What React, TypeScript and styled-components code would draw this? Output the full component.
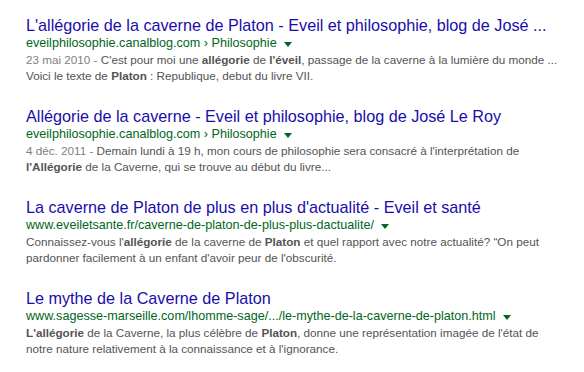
import styled, { createGlobalStyle } from "styled-components";

const GlobalStyle = createGlobalStyle`
  html, body {
    margin: 0;
    padding: 0;
    background: #ffffff;
  }
  body {
    font-family: "Liberation Sans", Arial, sans-serif;
  }
`;

const Page = styled.div`
  width: 584px;
  height: 372px;
  padding: 16px 0 0 26px;
  box-sizing: border-box;
  display: flex;
  flex-direction: column;
  gap: 23px;
  overflow: hidden;
`;

const Result = styled.div`
  display: flex;
  flex-direction: column;
`;

const Title = styled.a`
  font-size: 16.2px;
  line-height: 19px;
  color: #1a0dab;
  text-decoration: none;
  white-space: nowrap;
`;

const UrlRow = styled.div`
  display: flex;
  align-items: center;
  font-size: 12.6px;
  line-height: 17px;
  color: #006621;
  white-space: nowrap;
`;

const Arrow = styled.span`
  margin-left: 7px;
  margin-top: 1px;
  width: 0;
  height: 0;
  border-left: 4px solid transparent;
  border-right: 4px solid transparent;
  border-top: 5px solid #006621;
`;

const Snippet = styled.div`
  font-size: 11.7px;
  line-height: 16px;
  color: #545454;
  white-space: nowrap;
  b {
    font-weight: bold;
    color: #545454;
  }
`;

const Date = styled.span`
  color: #808080;
`;

function App() {
  return (
    <Page>
      <GlobalStyle />
      <Result>
        <Title>L'allégorie de la caverne de Platon - Eveil et philosophie, blog de José ...</Title>
        <UrlRow>eveilphilosophie.canalblog.com › Philosophie<Arrow /></UrlRow>
        <Snippet>
          <Date>23 mai 2010 - </Date>C'est pour moi une <b>allégorie</b> de <b>l'éveil</b>, passage de la caverne à la lumière du monde ...<br />
          Voici le texte de <b>Platon</b> : Republique, debut du livre VII.
        </Snippet>
      </Result>
      <Result>
        <Title>Allégorie de la caverne - Eveil et philosophie, blog de José Le Roy</Title>
        <UrlRow>eveilphilosophie.canalblog.com › Philosophie<Arrow /></UrlRow>
        <Snippet>
          <Date>4 déc. 2011 - </Date>Demain lundi à 19 h, mon cours de philosophie sera consacré à l'interprétation de<br />
          <b>l'Allégorie</b> de la Caverne, qui se trouve au début du livre...
        </Snippet>
      </Result>
      <Result>
        <Title>La caverne de Platon de plus en plus d'actualité - Eveil et santé</Title>
        <UrlRow>www.eveiletsante.fr/caverne-de-platon-de-plus-plus-dactualite/<Arrow /></UrlRow>
        <Snippet>
          Connaissez-vous l'<b>allégorie</b> de la caverne de <b>Platon</b> et quel rapport avec notre actualité? “On peut<br />
          pardonner facilement à un enfant d'avoir peur de l'obscurité.
        </Snippet>
      </Result>
      <Result>
        <Title>Le mythe de la Caverne de Platon</Title>
        <UrlRow>www.sagesse-marseille.com/lhomme-sage/.../le-mythe-de-la-caverne-de-platon.html<Arrow /></UrlRow>
        <Snippet>
          <b>L'allégorie</b> de la Caverne, la plus célèbre de <b>Platon</b>, donne une représentation imagée de l'état de<br />
          notre nature relativement à la connaissance et à l'ignorance.
        </Snippet>
      </Result>
    </Page>
  );
}

export default App;
